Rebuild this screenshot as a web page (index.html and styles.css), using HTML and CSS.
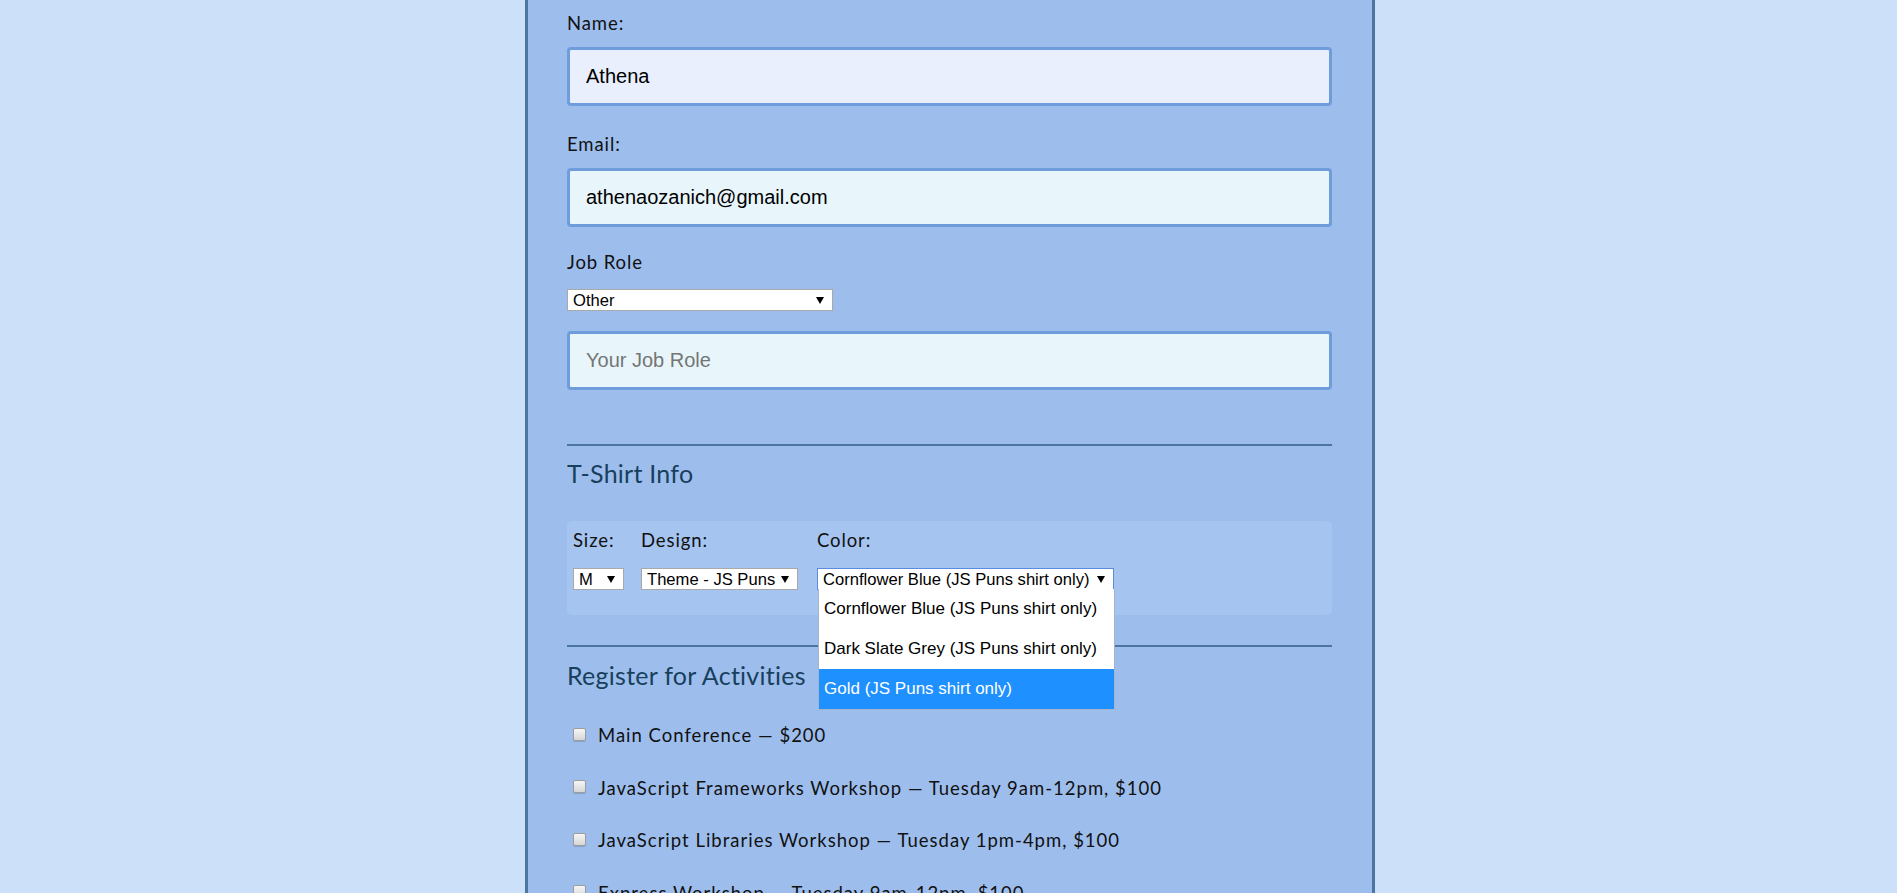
FILE: index.html
```html
<!DOCTYPE html>
<html lang="en">
<head>
<meta charset="utf-8">
<title>Registration Form</title>
<link rel="stylesheet" href="styles.css">
</head>
<body>
<div class="page">
  <form class="panel">
    <label class="field-label" for="name">Name:</label>
    <input class="text-input name-input" id="name" type="text" value="Athena">

    <label class="field-label email-label" for="mail">Email:</label>
    <input class="text-input" id="mail" type="email" value="athenaozanich@gmail.com">

    <label class="field-label job-label">Job Role</label>
    <div class="select role-select"><span class="select-text">Other</span><span class="arrow"></span></div>
    <input class="text-input job-input" type="text" placeholder="Your Job Role">

    <hr class="rule rule-first">
    <h2 class="section-title">T-Shirt Info</h2>

    <div class="shirt-box">
      <div class="shirt-group size-group">
        <label class="field-label">Size:</label>
        <div class="select size-select"><span class="select-text">M</span><span class="arrow"></span></div>
      </div>
      <div class="shirt-group design-group">
        <label class="field-label">Design:</label>
        <div class="select design-select"><span class="select-text">Theme - JS Puns</span><span class="arrow"></span></div>
      </div>
      <div class="shirt-group color-group">
        <label class="field-label">Color:</label>
        <div class="select color-select focused"><span class="select-text">Cornflower Blue (JS Puns shirt only)</span><span class="arrow"></span>
          <ul class="dropdown">
            <li class="option">Cornflower Blue (JS Puns shirt only)</li>
            <li class="option">Dark Slate Grey (JS Puns shirt only)</li>
            <li class="option selected">Gold (JS Puns shirt only)</li>
          </ul>
        </div>
      </div>
    </div>

    <hr class="rule rule-second">
    <h2 class="section-title activities-title">Register for Activities</h2>

    <ul class="activities">
      <li class="activity"><span class="checkbox"></span>Main Conference — $200</li>
      <li class="activity"><span class="checkbox"></span>JavaScript Frameworks Workshop — Tuesday 9am-12pm, $100</li>
      <li class="activity"><span class="checkbox"></span>JavaScript Libraries Workshop — Tuesday 1pm-4pm, $100</li>
      <li class="activity"><span class="checkbox"></span>Express Workshop — Tuesday 9am-12pm, $100</li>
      <li class="activity"><span class="checkbox"></span>Node.js Workshop — Tuesday 1pm-4pm, $100</li>
    </ul>
  </form>
</div>
</body>
</html>
```
FILE: styles.css
```css
html, body {
  margin: 0;
  height: 100%;
  overflow: hidden;
}

body {
  background: #cce0f9;
  font-family: Lato, "Noto Sans", sans-serif;
  color: #111;
}

.page {
  padding-left: 3px;
}

.panel {
  box-sizing: border-box;
  width: 850px;
  min-height: 1200px;
  margin: 0 auto;
  padding: 12px 40px 0 39px;
  background: #9dbeed;
  border-left: 3px solid #4b76a0;
  border-right: 3px solid #4b76a0;
}

.field-label {
  display: block;
  font-size: 18.5px;
  line-height: 22px;
  letter-spacing: 0.9px;
  color: #111;
}

.text-input {
  display: block;
  box-sizing: border-box;
  width: 100%;
  height: 59px;
  margin: 13px 0 0;
  padding: 0 16px;
  border: 3px solid #6f9ddb;
  border-radius: 4px;
  background: #e8f5fb;
  font-family: "Liberation Sans", Arial, sans-serif;
  font-size: 20px;
  color: #000;
  outline: none;
}

.name-input {
  background: #e9effc;
}

.text-input::placeholder {
  color: #757575;
}

.email-label {
  margin-top: 27px;
}

.job-label {
  margin-top: 24px;
}

.select {
  position: relative;
  box-sizing: border-box;
  display: flex;
  align-items: center;
  height: 22px;
  padding: 1px 8px 0 5px;
  background: #fff;
  border: 1px solid #a9a9a9;
  font-family: "Liberation Sans", Arial, sans-serif;
  font-size: 16.6px;
  letter-spacing: 0;
  color: #000;
  white-space: nowrap;
}

.select-text {
  flex: 1;
}

.arrow {
  flex: none;
  width: 0;
  height: 0;
  border-left: 4px solid transparent;
  border-right: 4px solid transparent;
  border-top: 7px solid #000;
  margin-left: 6px;
}

.role-select {
  width: 266px;
  margin-top: 16px;
}

.job-input {
  margin-top: 20px;
}

.rule {
  border: 0;
  height: 2px;
  margin: 0;
  background: #4b76a0;
}

.rule-first {
  margin-top: 54px;
}

.section-title {
  margin: 12px 0 0;
  font-size: 25px;
  line-height: 30px;
  letter-spacing: 0.25px;
  font-weight: 400;
  color: #183f5c;
}

.shirt-box {
  display: flex;
  margin-top: 33px;
  padding: 8px 6px 25px;
  background: #a5c4f0;
  border-radius: 5px;
}

.shirt-group .select {
  margin-top: 17px;
}

.size-group {
  margin-right: 17px;
}

.design-group {
  margin-right: 19px;
}

.size-select {
  width: 51px;
}

.design-select {
  width: 157px;
}

.color-select {
  width: 297px;
}

.focused {
  border-color: #5b8be0;
}

.dropdown {
  position: absolute;
  top: 20px;
  left: 0;
  box-sizing: border-box;
  width: 297px;
  margin: 0;
  padding: 0;
  list-style: none;
  background: #fff;
  border: 1px solid #a6b4c8;
  border-top: 0;
  z-index: 5;
}

.option {
  height: 40px;
  line-height: 40px;
  padding: 0 5px;
  font-size: 17px;
  color: #000;
}

.option.selected {
  background: #1e90ff;
  color: #fff;
}

.rule-second {
  margin-top: 30px;
}

.activities-title {
  margin-top: 13px;
}

.activities {
  margin: 34px 0 0;
  padding: 0 0 0 6px;
  list-style: none;
}

.activity {
  display: flex;
  align-items: center;
  height: 22px;
  margin-bottom: 30.5px;
  font-size: 18.5px;
  line-height: 22px;
  letter-spacing: 1px;
  color: #111;
}

.checkbox {
  flex: none;
  box-sizing: border-box;
  width: 13px;
  height: 13px;
  margin-right: 12px;
  margin-top: -2px;
  border: 1px solid #9c9c9c;
  border-radius: 2px;
  background: linear-gradient(#f6f6f6, #d6d6d6);
  box-shadow: 0 1px 1px rgba(0, 0, 0, 0.15);
}
```
